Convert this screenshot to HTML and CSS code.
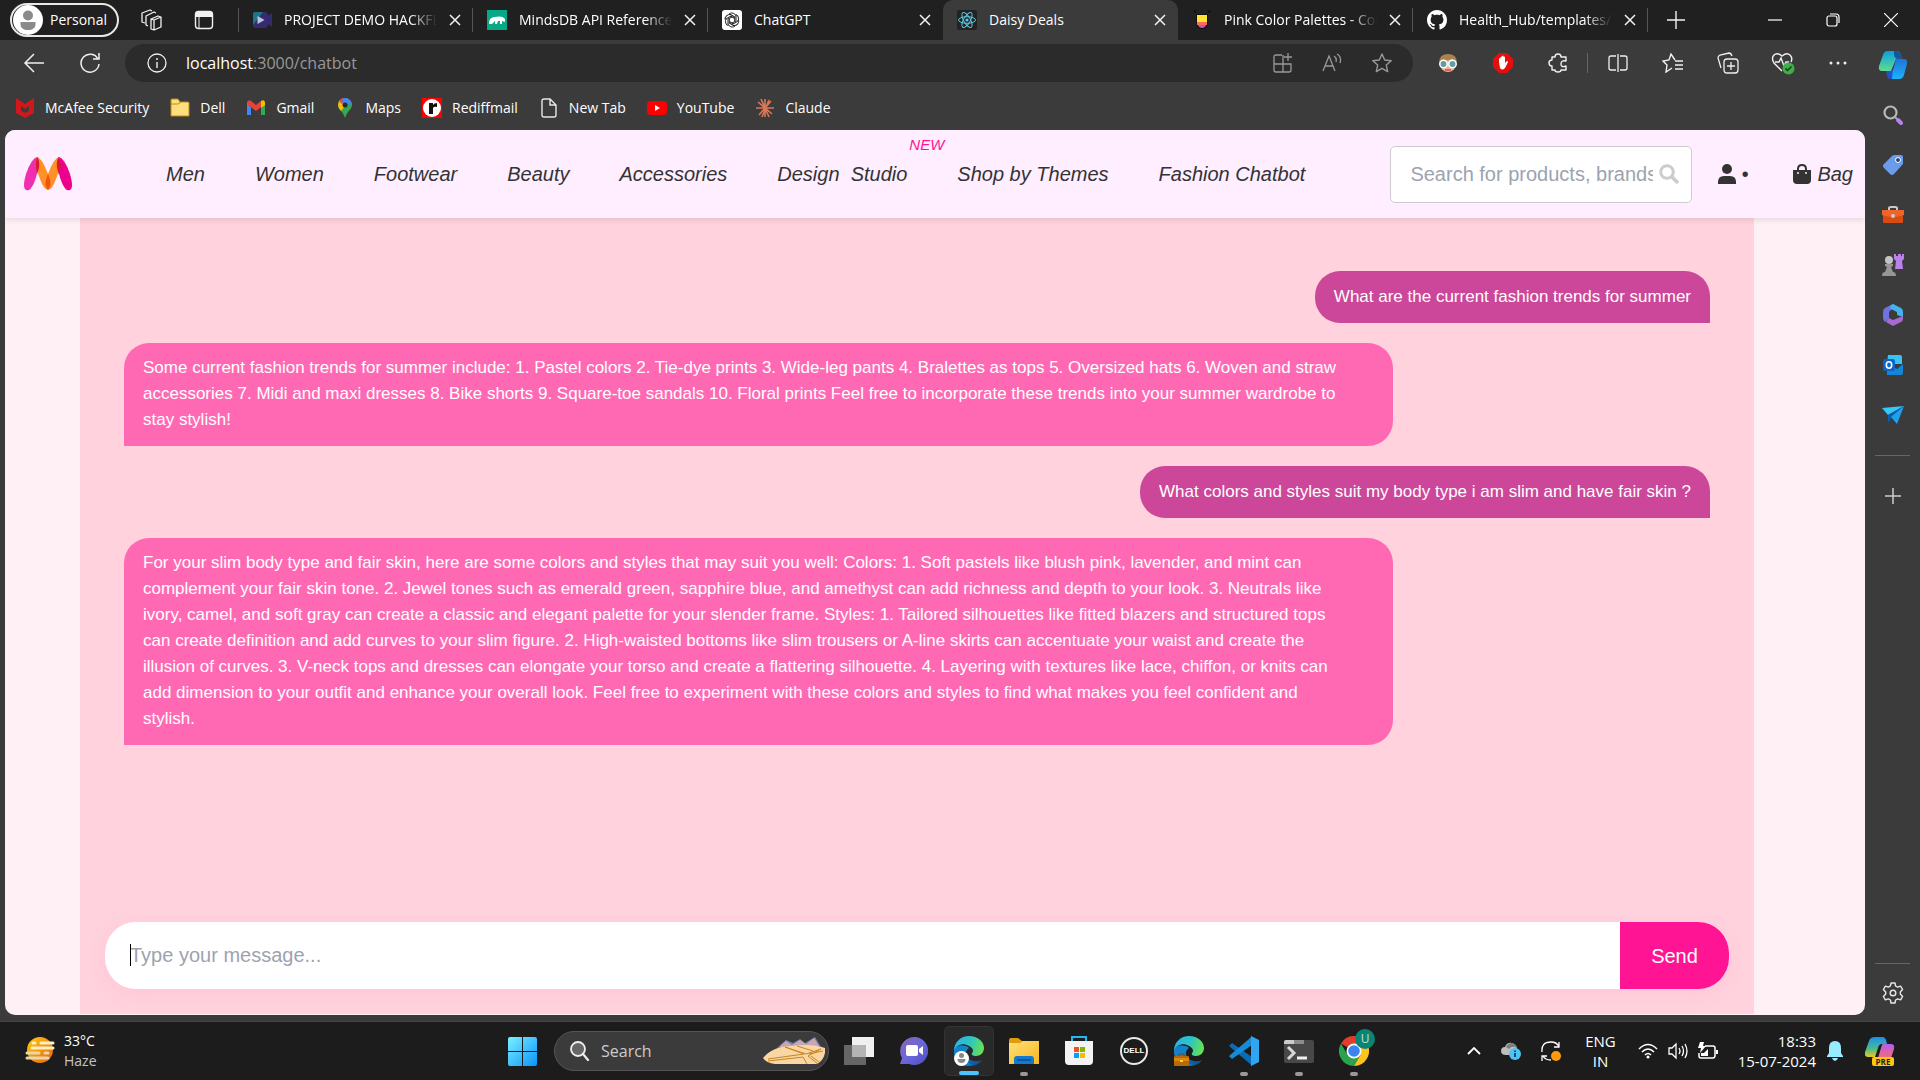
FILE: index.html
```html
<!DOCTYPE html>
<html lang="en">
<head>
    <meta charset="UTF-8">
    <meta name="viewport" content="width=device-width, initial-scale=1.0">
    <title>Daisy Deals</title>
    <link rel="stylesheet" href="styles.css">
</head>
<body>
    <!-- Shared gradients and symbols -->
    <svg class="defs" width="0" height="0" aria-hidden="true">
        <defs>
            <linearGradient id="edgeBlue" x1="0" y1="0" x2="1" y2="1"><stop offset="0" stop-color="#1b9de2"/><stop offset="1" stop-color="#0a4a94"/></linearGradient>
            <linearGradient id="edgeGreen" x1="0" y1="0.4" x2="1" y2="0.6"><stop offset="0" stop-color="#2fb1e8"/><stop offset="0.5" stop-color="#2cc5c3"/><stop offset="1" stop-color="#6be34c"/></linearGradient>
            <linearGradient id="winBlue" x1="0" y1="0" x2="1" y2="1"><stop offset="0" stop-color="#7bf0ff"/><stop offset="1" stop-color="#0a93fb"/></linearGradient>
            <linearGradient id="folderYellow" x1="0" y1="0" x2="1" y2="1"><stop offset="0" stop-color="#ffe07a"/><stop offset="1" stop-color="#f8b71c"/></linearGradient>
            <linearGradient id="copGreen" x1="0" y1="0" x2="0" y2="1"><stop offset="0" stop-color="#0c9fe0"/><stop offset="1" stop-color="#5fdc8e"/></linearGradient>
            <linearGradient id="copBlue" x1="0" y1="0" x2="0" y2="1"><stop offset="0" stop-color="#2471d8"/><stop offset="1" stop-color="#19b4fa"/></linearGradient>
            <linearGradient id="preLeft" x1="0" y1="0" x2="0" y2="1"><stop offset="0" stop-color="#1a8ff0"/><stop offset="0.6" stop-color="#4cbb8a"/><stop offset="1" stop-color="#f0c81e"/></linearGradient>
            <linearGradient id="preRight" x1="0" y1="0" x2="0" y2="1"><stop offset="0" stop-color="#b35cf0"/><stop offset="1" stop-color="#fa6a70"/></linearGradient>
            <linearGradient id="hazeSun" x1="0" y1="0" x2="1" y2="1"><stop offset="0" stop-color="#ffcd11"/><stop offset="1" stop-color="#e75f10"/></linearGradient>
            <linearGradient id="meetPurple" x1="0" y1="0" x2="1" y2="1"><stop offset="0" stop-color="#8a63b8"/><stop offset="0.5" stop-color="#6b68d8"/><stop offset="1" stop-color="#4d4cc4"/></linearGradient>
        </defs>
        <symbol id="edge" viewBox="0 0 30 30">
            <path d="M0 15c0 8 7 15 15 15 6 0 10-2 13-6-5 3-16 1-16-7 0-2 1-4 3-5-5-4-13-3-15 3z" fill="url(#edgeBlue)"/>
            <path d="M0 15c2-6 8-6 12-4-4 6-1 15 6 18-9 3-18-4-18-14z" fill="#1481cf"/>
            <path d="M0 15C0 6 7 0 15 0c9 0 15 6 15 12 0 5-4 8-8 8-3 0-5-1-4-3 2-2 1-5-3-7C9 6 2 9 0 15z" fill="url(#edgeGreen)"/>
        </symbol>
        <symbol id="x" viewBox="0 0 12 12"><path d="M1 1l10 10M11 1L1 11" stroke="#f2f2f2" stroke-width="1.5" fill="none"/></symbol>
        <symbol id="star" viewBox="0 0 22 22"><path d="M11 2l2.7 6 6.5.7-4.9 4.4 1.4 6.5L11 16.300l-5.700 3.300 1.400-6.500L1.800 8.700l6.500-.7z" fill="none" stroke="currentColor" stroke-width="1.4" stroke-linejoin="round"/></symbol>
    </svg>

    <!-- Tab strip -->
    <header class="tab-strip">
        <button class="profile">
            <svg viewBox="0 0 30 30" width="30" height="30"><circle cx="15" cy="15" r="15" fill="#fff"/><circle cx="15" cy="10.500" r="5" fill="#8a8a8a"/><path d="M7.500 17h15v2c0 4-3 6-7.500 6s-7.500-2-7.500-6z" fill="#8a8a8a"/></svg>
            Personal
        </button>
        <button class="strip-icon" aria-label="Workspaces">
            <svg viewBox="0 0 22 22" width="22" height="22" fill="none" stroke="#f2f2f2" stroke-width="1.300" stroke-linejoin="round"><path d="M11 10l7-3 3 1v10l-7 3-3-1zM11 10l3 1v10M14 11l7-3"/><path d="M8 17l-2-1V7l8-4 2 1M5 14l-3-1V4l8-3 2 1"/></svg>
        </button>
        <button class="strip-icon" aria-label="Tab actions">
            <svg viewBox="0 0 20 20" width="20" height="20"><rect x="1.500" y="1.500" width="17" height="17" rx="3" fill="none" stroke="#f2f2f2" stroke-width="1.400"/><path d="M1.500 7V4q0-3 3-3h11q3 0 3 3v3z" fill="#f2f2f2"/><path d="M5 7v11" stroke="#f2f2f2"/></svg>
        </button>
        <nav class="tabs">
            <div class="tab">
                <svg class="favicon" viewBox="0 0 20 20"><path d="M1 4q0-2 2-2h10q3 0 3 3v1l4-3v14l-4-3q0 4-3 4H3q-2 0-2-3z" fill="#362b72"/><path d="M1 4q0-2 2-2h8L1 15z" fill="#1e7586"/><path d="M5.500 6v8l7-4z" fill="#b9c7d8"/></svg>
                <span class="tab-title fade">PROJECT DEMO HACKFEST</span>
                <button class="tab-close" aria-label="Close tab"><svg><use href="#x"/></svg></button>
            </div>
            <div class="tab">
                <svg class="favicon" viewBox="0 0 20 20"><path d="M0 0h20v20H0z" fill="#06a885"/><path d="M2 14c0-5 2-7 6-7 3-1 8-1 10 2v3l-3-1v3h-2v-3h-2l-1 3H8v-3l-3 3z" fill="#fff"/></svg>
                <span class="tab-title fade">MindsDB API Reference - Docs</span>
                <button class="tab-close" aria-label="Close tab"><svg><use href="#x"/></svg></button>
            </div>
            <div class="tab no-line">
                <svg class="favicon" viewBox="0 0 20 20"><rect width="20" height="20" rx="3" fill="#fff"/><g fill="none" stroke="#222"><path id="petal" d="M7 4c2-2 6-1 7 2v5l-4 2"/><use href="#petal" transform="rotate(60 10 10)"/><use href="#petal" transform="rotate(120 10 10)"/><use href="#petal" transform="rotate(180 10 10)"/><use href="#petal" transform="rotate(240 10 10)"/><use href="#petal" transform="rotate(300 10 10)"/></g></svg>
                <span class="tab-title">ChatGPT</span>
                <button class="tab-close" aria-label="Close tab"><svg><use href="#x"/></svg></button>
            </div>
            <div class="tab active no-line">
                <svg class="favicon" viewBox="0 0 20 20"><rect width="20" height="20" rx="2" fill="#222"/><g fill="none" stroke="#5cc8e4"><ellipse cx="10" cy="10" rx="8.500" ry="3.300"/><ellipse cx="10" cy="10" rx="8.500" ry="3.300" transform="rotate(60 10 10)"/><ellipse cx="10" cy="10" rx="8.500" ry="3.300" transform="rotate(120 10 10)"/></g><circle cx="10" cy="10" r="1.600" fill="#5cc8e4"/></svg>
                <span class="tab-title">Daisy Deals</span>
                <button class="tab-close" aria-label="Close tab"><svg><use href="#x"/></svg></button>
            </div>
            <div class="tab">
                <svg class="favicon" viewBox="0 0 20 20"><path d="M4 4h12v8q0 7-6 7t-6-7z" fill="#111"/><path d="M5 5h10v7H5z" fill="#ffe32e"/><path d="M5 12h10v3H5z" fill="#ff6c5f"/><path d="M6 15h8q-1 3-4 3t-4-3z" fill="#c05bb5"/><circle cx="3" cy="1.500" r="1.500" fill="#111"/><circle cx="17" cy="1.500" r="1.500" fill="#111"/></svg>
                <span class="tab-title fade">Pink Color Palettes - Color Hunt</span>
                <button class="tab-close" aria-label="Close tab"><svg><use href="#x"/></svg></button>
            </div>
            <div class="tab">
                <svg class="favicon" viewBox="0 0 16 16"><path fill="#fff" d="M8 0C3.580 0 0 3.580 0 8c0 3.540 2.290 6.530 5.470 7.590.4.070.55-.17.55-.38 0-.19-.01-.82-.01-1.490-2.010.37-2.530-.49-2.690-.94-.09-.23-.48-.94-.82-1.130-.28-.15-.68-.52-.01-.53.63-.01 1.080.58 1.230.82.72 1.210 1.870.87 2.330.66.070-.52.28-.87.510-1.070-1.780-.2-3.640-.89-3.640-3.950 0-.87.31-1.590.82-2.150-.08-.2-.36-1.020.08-2.120 0 0 .67-.21 2.200.82.64-.18 1.320-.27 2-.27s1.360.09 2 .27c1.530-1.040 2.200-.82 2.200-.82.44 1.100.16 1.920.08 2.120.51.56.82 1.270.82 2.150 0 3.070-1.870 3.750-3.650 3.950.29.25.54.73.54 1.480 0 1.070-.01 1.930-.01 2.200 0 .21.15.46.55.38A8.010 8.010 0 0 0 16 8c0-4.420-3.580-8-8-8z"/></svg>
                <span class="tab-title fade">Health_Hub/templates/index</span>
                <button class="tab-close" aria-label="Close tab"><svg><use href="#x"/></svg></button>
            </div>
            <button class="new-tab" aria-label="New tab"><svg viewBox="0 0 18 18" width="18" height="18"><path d="M9 0v18M0 9h18" stroke="#f2f2f2" stroke-width="1.400"/></svg></button>
        </nav>
        <div class="window-buttons">
            <button aria-label="Minimize"><svg viewBox="0 0 14 14" width="14" height="14"><path d="M0 7h14" stroke="#fff" stroke-width="1.200"/></svg></button>
            <button aria-label="Restore"><svg viewBox="0 0 14 14" width="14" height="14" fill="none" stroke="#fff" stroke-width="1.200"><rect x="1" y="3" width="10" height="10" rx="2"/><path d="M4 1h6q3 0 3 3v6"/></svg></button>
            <button aria-label="Close"><svg viewBox="0 0 14 14" width="14" height="14"><path d="M0 0l14 14M14 0L0 14" stroke="#fff" stroke-width="1.200"/></svg></button>
        </div>
    </header>

    <div class="browser">
        <div class="browser-left">
            <!-- Address bar -->
            <div class="toolbar">
                <button class="tool" aria-label="Back"><svg viewBox="0 0 22 22" width="22" height="22"><path d="M21 11H2m9-9l-9 9 9 9" fill="none" stroke="#f0f0f0" stroke-width="1.500"/></svg></button>
                <button class="tool" aria-label="Refresh"><svg viewBox="0 0 22 22" width="22" height="22"><path d="M19 7a9 9 0 1 0 1 5M20 1v6h-6" fill="none" stroke="#f0f0f0" stroke-width="1.500"/></svg></button>
                <div class="address">
                    <svg viewBox="0 0 20 20" width="20" height="20"><circle cx="10" cy="10" r="9" fill="none" stroke="#f0f0f0" stroke-width="1.300"/><path d="M10 9v6M10 5v2" stroke="#f0f0f0" stroke-width="1.400"/></svg>
                    <span class="url"><b>localhost</b>:3000/chatbot</span>
                    <button aria-label="Apps"><svg viewBox="0 0 20 20" width="20" height="20" fill="none" stroke="#999" stroke-width="1.300"><path d="M9 2H3q-2 0-2 2v13q0 2 2 2h13q2 0 2-2v-6H1M10 2v17M15 0v8M11 4h8"/></svg></button>
                    <button aria-label="Read aloud"><svg viewBox="0 0 20 20" width="20" height="20" fill="none" stroke="#999" stroke-width="1.300"><path d="M1 18L7 3l6 15M3 13h8M12 3q3 2 2 6M15 1q5 3 3 9"/></svg></button>
                    <button aria-label="Favourite" class="muted"><svg width="22" height="22"><use href="#star"/></svg></button>
                </div>
                <div class="extensions">
                    <button aria-label="Grandma"><svg viewBox="0 0 20 20" width="20" height="20"><circle cx="10" cy="11" r="8" fill="#edb290"/><path d="M1 10Q1 1 10 1t9 9l-5-4q-6 3-9 1z" fill="#a88350"/><circle cx="5.500" cy="11" r="3.700" fill="#5f9ba8" stroke="#fff" stroke-width="1.500"/><circle cx="14.500" cy="11" r="3.700" fill="#5f9ba8" stroke="#fff" stroke-width="1.500"/><path d="M7 17h6" stroke="#c5534c" stroke-width="1.500"/></svg></button>
                    <button aria-label="Ad blocker"><svg viewBox="0 0 20 20" width="20" height="20"><path d="M6 0h8l6 6v8l-6 6H6l-6-6V6z" fill="#e60d0d"/><path d="M6 9V5.500q1-1 1.500 0V4q1-1 1.500 0V3q1-1 1.500 0v1q1-1 1.500 0v6l2-2q1 0 1 1l-3 6q-3 3-5 0z" fill="#fff"/></svg></button>
                    <button aria-label="Extensions"><svg viewBox="0 0 20 20" width="20" height="20"><path d="M4 4h3q0-3 3-3t3 3h5v4q-5-1-5 3t5 2v4h-5q0 2-3 2t-3-2H4v-4q-3 0-3-3t3-3z" fill="none" stroke="#f0f0f0" stroke-width="1.400" stroke-linejoin="round"/></svg></button>
                    <span class="divider"></span>
                    <button aria-label="Split screen"><svg viewBox="0 0 20 20" width="20" height="20" fill="none" stroke="#f0f0f0" stroke-width="1.300"><path d="M8 3H3Q1 3 1 5v10q0 2 2 2h5M12 3h5q2 0 2 2v10q0 2-2 2h-5M10 1v18"/></svg></button>
                    <button aria-label="Favourites"><svg viewBox="0 0 22 20" width="22" height="20" fill="none" stroke="#f0f0f0" stroke-width="1.400"><path d="M13 7L9 1 7 7 1 8l4 4-1 7 6-4M13 8h8M13 12h8M13 16h8"/></svg></button>
                    <button aria-label="Collections"><svg viewBox="0 0 22 22" width="22" height="22" fill="none" stroke="#f0f0f0" stroke-width="1.300"><rect x="7" y="7" width="14" height="14" rx="3"/><path d="M14 10v8M10 14h8M4 16L1 6q0-2 2-3l9-2q2 0 3 3"/></svg></button>
                    <button aria-label="Browser essentials"><svg viewBox="0 0 24 24" width="24" height="24"><path d="M11 20L3 12Q0 7 3 4t8 1q5-4 8-1t1 7M4 11h4l2-4 3 8 2-4h3" fill="none" stroke="#f0f0f0" stroke-width="1.400"/><circle cx="17.500" cy="17.500" r="6" fill="#3fae49"/><path d="M14.500 17.500l2 2 4-4" fill="none" stroke="#103d16" stroke-width="1.500"/></svg></button>
                    <button aria-label="Settings and more"><svg viewBox="0 0 20 20" width="20" height="20" fill="#f0f0f0"><circle cx="3" cy="10" r="1.500"/><circle cx="10" cy="10" r="1.500"/><circle cx="17" cy="10" r="1.500"/></svg></button>
                </div>
            </div>

            <!-- Bookmarks -->
            <nav class="bookmarks">
                <a href="#"><svg viewBox="0 0 20 20"><path d="M1 0l9 6 9-6v15l-9 5-9-5zM6 8v5l4 2 4-2V8l-4 3z" fill="#d0181c" fill-rule="evenodd"/></svg>McAfee Security</a>
                <a href="#"><svg viewBox="0 0 20 20"><path d="M1 2q0-1 1-1h6l2 3h8q1 0 1 1v13H1z" fill="#ffde7d" stroke="#c08a10"/><path d="M1 6h7l3-2" fill="none" stroke="#c08a10"/></svg>Dell</a>
                <a href="#"><svg viewBox="0 0 20 20"><path d="M1 5v12h4V9z" fill="#4285f4"/><path d="M19 5v12h-4V9z" fill="#34a853"/><path d="M1 4q2-3 4-1l5 4 5-4v6l-5 4-9-7z" fill="#ea4335"/><path d="M15 3q3-2 4 1v3l-4 3z" fill="#fbbc04"/></svg>Gmail</a>
                <a href="#"><svg viewBox="0 0 20 20"><path d="M3 7a7 7 0 0 1 14 0q0 3-4 7-2 3-3 6-1-3-3-6-4-4-4-7z" fill="#34a853"/><path d="M3 7q0 3 3 6l8-10Q8-2 4 3z" fill="#fbbc04"/><path d="M4 3l3 3 6-5Q8-2 4 3z" fill="#ea4335"/><path d="M8 0q7-1 9 6l-7 1-3-3z" fill="#4285f4"/><circle cx="10" cy="7" r="2.500" fill="#2b2b2b"/></svg>Maps</a>
                <a href="#"><svg viewBox="0 0 20 20"><path d="M0 0h20v20H0z" fill="#f00"/><circle cx="10" cy="10" r="9" fill="#fff"/><path d="M7 5h4v2q1-2 4-2v4q-3-1-4 1v6H7z" fill="#111"/></svg>Rediffmail</a>
                <a href="#"><svg viewBox="0 0 20 20"><path d="M3 3q0-2 2-2h6l6 6v10q0 2-2 2H5q-2 0-2-2zM11 1v6h6" fill="none" stroke="#e8e8e8" stroke-width="1.400"/></svg>New Tab</a>
                <a href="#"><svg viewBox="0 0 20 20"><rect y="3" width="20" height="14" rx="4" fill="#f00"/><path d="M8 7v6l5-3z" fill="#fff"/></svg>YouTube</a>
                <a href="#"><svg viewBox="0 0 20 20"><path d="M10 1v18M1 10h18M3 4l14 12M16 3L4 17M6 1l8 18M14 2L7 19" stroke="#d97757" stroke-width="1.600"/></svg>Claude</a>
            </nav>

            <!-- The shop page -->
            <div class="page">
                <header class="navbar">
                    <a class="logo" href="#" aria-label="Daisy Deals">
                        <svg viewBox="0 0 48 34" width="48" height="34">
                            <path d="M13 0Q7 2 2 17-2 31 2 33q4 2 8-7Q16 11 14 0z" fill="#f02eb0"/>
                            <path d="M35 0q6 2 11 17 4 14 0 16-4 2-8-7Q32 11 34 0z" fill="#ed008c"/>
                            <path d="M13 0q5 1 11 17Q30 1 35 0q3 8-3 22-4 11-8 11t-8-11Q11 9 13 0z" fill="#ff9128"/>
                            <path d="M13 0q3 3 2 11l-2 6q-2-10 0-17z" fill="#d81b2a"/>
                            <path d="M35 0q-3 3-2 11l2 7q3-10 0-18z" fill="#d81b2a"/>
                            <path d="M24 17q5 11 0 16-5-5 0-16z" fill="#f4530f"/>
                        </svg>
                    </a>
                    <nav class="nav-links">
                        <a href="#">Men</a>
                        <a href="#">Women</a>
                        <a href="#">Footwear</a>
                        <a href="#">Beauty</a>
                        <a href="#">Accessories</a>
                        <a href="#" class="studio">Design&nbsp; Studio<sup>NEW</sup></a>
                        <a href="#">Shop by Themes</a>
                        <a href="#">Fashion Chatbot</a>
                    </nav>
                    <div class="search-box">
                        <input type="text" aria-label="Search" placeholder="Search for products, brands and more">
                        <svg viewBox="0 0 20 20" width="20" height="20"><circle cx="8" cy="8" r="6.300" fill="none" stroke="#ccc" stroke-width="3"/><path d="M13 13l6 6" stroke="#ccc" stroke-width="3.500"/></svg>
                    </div>
                    <a class="user" href="#" aria-label="Profile">
                        <svg viewBox="0 0 18 20" width="18" height="20" fill="#333"><circle cx="9" cy="5" r="5"/><path d="M0 20v-2q0-6 6-6h6q6 0 6 6v2z"/></svg>
                        <span>•</span>
                    </a>
                    <a class="bag" href="#">
                        <svg viewBox="0 0 18 20" width="18" height="20"><path d="M0 6h18v10q0 4-4 4H4q-4 0-4-4z" fill="#333"/><path d="M5 9V5q0-4 4-4t4 4v4" fill="none" stroke="#333" stroke-width="2"/><circle cx="5" cy="9" r="1" fill="#fef"/><circle cx="13" cy="9" r="1" fill="#fef"/></svg>
                        Bag
                    </a>
                </header>

                <main class="chat">
                    <div class="messages">
                        <div class="message user-message">What are the current fashion trends for summer</div>
                        <div class="message bot-message">Some current fashion trends for summer include: 1. Pastel colors 2. Tie-dye prints 3. Wide-leg pants 4. Bralettes as tops 5. Oversized hats 6. Woven and straw accessories 7. Midi and maxi dresses 8. Bike shorts 9. Square-toe sandals 10. Floral prints Feel free to incorporate these trends into your summer wardrobe to stay stylish!</div>
                        <div class="message user-message">What colors and styles suit my body type i am slim and have fair skin ?</div>
                        <div class="message bot-message">For your slim body type and fair skin, here are some colors and styles that may suit you well: Colors: 1. Soft pastels like blush pink, lavender, and mint can complement your fair skin tone. 2. Jewel tones such as emerald green, sapphire blue, and amethyst can add richness and depth to your look. 3. Neutrals like ivory, camel, and soft gray can create a classic and elegant palette for your slender frame. Styles: 1. Tailored silhouettes like fitted blazers and structured tops can create definition and add curves to your slim figure. 2. High-waisted bottoms like slim trousers or A-line skirts can accentuate your waist and create the illusion of curves. 3. V-neck tops and dresses can elongate your torso and create a flattering silhouette. 4. Layering with textures like lace, chiffon, or knits can add dimension to your outfit and enhance your overall look. Feel free to experiment with these colors and styles to find what makes you feel confident and stylish.</div>
                    </div>
                    <form class="message-form">
                        <input type="text" aria-label="Message" placeholder="Type your message...">
                        <button type="button">Send</button>
                    </form>
                </main>
            </div>
        </div>

        <!-- Edge sidebar -->
        <aside class="sidebar">
            <button aria-label="Copilot"><svg viewBox="0 0 30 30" width="30" height="30"><path d="M10 1h9q3 0 4 5l1 3h-6l-5 12H4q-4 0-3-5L5 5q1-4 5-4z" fill="url(#copGreen)"/><path d="M16 1h3q3 0 4 5l1 3h-4q-3 0-4-4z" fill="#14559e"/><path d="M20 9h6q4 0 3 5l-3 11q-1 4-5 4h-8q-4 0-4-7h3q3 0 4-5l1-4q1-4 2-4z" fill="url(#copBlue)"/><path d="M8 21h4q3 0 3-3l-1 11h-2q-3-1-4-8z" fill="#2450d0"/></svg></button>
            <button aria-label="Search"><svg viewBox="0 0 20 20" width="20" height="20"><circle cx="7.500" cy="7.500" r="6" fill="none" stroke="#b9b9b9" stroke-width="2.200"/><path d="M12 12l2 2" stroke="#aaa" stroke-width="2"/><path d="M15 15l3 3" stroke="#b684e8" stroke-width="4" stroke-linecap="round"/></svg></button>
            <button aria-label="Shopping"><svg viewBox="0 0 20 20" width="20" height="20"><path d="M0 10L9 1q1-1 3-1h6q2 0 2 2v7l-9 10q-2 2-4 0l-6-6q-2-2-1-3z" fill="#6b9beb"/><circle cx="15" cy="5" r="2.500" fill="#25477a" stroke="#fff"/></svg></button>
            <button aria-label="Tools"><svg viewBox="0 0 22 20" width="22" height="20"><path d="M7 6V3q0-1 2-1h4q2 0 2 1v3" fill="none" stroke="#c9c9c9" stroke-width="2"/><path d="M1 9h20v8q0 1-1 1H2q-1 0-1-1z" fill="#d94c11"/><path d="M0 5h22v5q-11 4-22 0z" fill="#ee642b"/><circle cx="11" cy="11" r="2" fill="#ccc"/></svg></button>
            <button aria-label="Games"><svg viewBox="0 0 22 22" width="22" height="22"><path d="M12 0h2v2h2V0h3v2h1V0h2v5l-2 2 1 8h-8l1-8-2-2z" fill="#bb80ea"/><circle cx="7" cy="6" r="4" fill="#c4c4c4"/><path d="M3 10h8v2l-2 1 2 5q3 0 3 4H0q0-4 3-4l2-5-2-1z" fill="#969696"/></svg></button>
            <button aria-label="Microsoft 365"><svg viewBox="0 0 20 22" width="20" height="22"><path d="M10 0L2 4Q0 5 0 8v6q0 2 2 4l4-3V9q0-2 2-3l5-4z" fill="#6f73e0"/><path d="M10 0l8 4q2 1 2 4v5l-6-2V8L8 5l-1-3z" fill="#42b3ee"/><path d="M20 12v3q0 2-2 3l-8 4-7-4 3-4 4 2z" fill="#a66ad0"/></svg></button>
            <button aria-label="Outlook"><svg viewBox="0 0 20 20" width="20" height="20"><path d="M5 0h12q2 0 2 2v7H4z" fill="#38c3f4"/><path d="M4 8l10 6 6-5v9q0 2-2 2H4z" fill="#1386d7"/><rect y="4" width="12" height="12" rx="2" fill="#0a66c8"/><ellipse cx="6" cy="10" rx="2.700" ry="3.200" fill="none" stroke="#fff" stroke-width="1.600"/></svg></button>
            <button aria-label="Drop"><svg viewBox="0 0 22 18" width="22" height="18"><path d="M0 2l22-2L6 9z" fill="#35c8fa"/><path d="M22 0L6 9v8l3-5z" fill="#0b5fae"/><path d="M22 0L9 11l6 7z" fill="#1ea1ec"/></svg></button>
            <hr>
            <button aria-label="Customize"><svg viewBox="0 0 16 16" width="16" height="16"><path d="M8 0v16M0 8h16" stroke="#ccc" stroke-width="1.500"/></svg></button>
            <hr class="bottom-line">
            <button aria-label="Settings"><svg viewBox="0 0 22 22" width="22" height="22" fill="none" stroke="#e8e8e8" stroke-width="1.400" stroke-linejoin="round"><path d="M9 1h4l.6 3 2 1.100 3-1 2 3.400L18.300 10v2l2.300 2.500-2 3.400-3-1-2 1.100-.6 3H9l-.6-3-2-1.100-3 1-2-3.400L3.700 12v-2L1.400 7.500l2-3.400 3 1 2-1.100z"/><circle cx="11" cy="11" r="2.800"/></svg></button>
        </aside>
    </div>

    <!-- Windows taskbar -->
    <footer class="taskbar">
        <div class="weather">
            <svg viewBox="0 0 30 30" width="30" height="30"><circle cx="15" cy="14" r="13" fill="url(#hazeSun)"/><g stroke-width="3" stroke-linecap="round"><path d="M8 7h2M16 7h12M7 12h21" stroke="#fff0c4"/><path d="M2 17h12M20 17h3M2 22h21" stroke="#ead6a8"/></g></svg>
            <p>33°C<br><span>Haze</span></p>
        </div>
        <div class="apps">
            <button class="app start" aria-label="Start"><svg viewBox="0 0 29 29" width="29" height="29"><path d="M0 2q0-2 2-2h12v14H0zM15 0h12q2 0 2 2v12H15zM0 15h14v14H2q-2 0-2-2zM15 15h14v12q0 2-2 2H15z" fill="url(#winBlue)"/></svg></button>
            <label class="task-search">
                <svg viewBox="0 0 20 20" width="20" height="20"><circle cx="8" cy="8" r="7" fill="#666" stroke="#eee" stroke-width="1.800"/><path d="M13 13l5 6" stroke="#eee" stroke-width="2.200" stroke-linecap="round"/></svg>
                <input type="text" placeholder="Search" aria-label="Search Windows">
                <svg class="hill" viewBox="0 0 62 30" width="62" height="30"><path d="M14 12l9-8 7 3 7-4 5 4 10-6 6 10v8H14z" fill="#7181ae"/><path d="M17 10l6-5 6 4 8-5 6 4 8-6 5 8-38 6z" fill="#c9a7b0"/><path d="M0 22Q10 10 29 10q20-3 33 2v5q-2 9-9 11H12Q3 27 0 22z" fill="#f9d6a3"/><path d="M5 23l36-5-19-7 21 7 15-5-13 7 10 8M5 25l35-4 4 7M34 10l16 5M46 18l14-3M48 20l8 6" fill="none" stroke="#c98422"/></svg>
            </label>
            <button class="app" aria-label="Task view"><svg viewBox="0 0 30 28" width="30" height="28"><path d="M8 0h22v20H8z" fill="#f0f0f0"/><path d="M0 8h22v20H0z" fill="#666"/><path d="M8 8h14v12H8z" fill="#b4b4b4"/></svg></button>
            <button class="app" aria-label="Chat"><svg viewBox="0 0 28 28" width="28" height="28"><path d="M14 0a14 14 0 1 1-5 27H0l2-6A14 14 0 0 1 14 0z" fill="url(#meetPurple)"/><rect x="6" y="8" width="12" height="11" rx="2" fill="#fff"/><path d="M19 12l4-3v9l-4-3z" fill="#fff"/></svg></button>
            <button class="app current" aria-label="Edge"><svg viewBox="0 0 30 30" width="30" height="30"><use href="#edge" width="30" height="30"/><circle cx="7.500" cy="22.500" r="7.500" fill="#fff"/><circle cx="7.500" cy="19.500" r="2.500" fill="#888"/><path d="M3.500 23h8q0 4-4 4t-4-4z" fill="#888"/></svg></button>
            <button class="app open" aria-label="File Explorer"><svg viewBox="0 0 30 28" width="30" height="28"><path d="M0 3q0-2 2-2h7l4 3h11v8H0z" fill="#e09c0c"/><path d="M0 6h11l3-2h16v23H0z" fill="url(#folderYellow)"/><path d="M5 27v-5q0-3 3-3h14q3 0 3 3v5z" fill="#1579d0"/><path d="M8 23h14" stroke="#0b4f98" stroke-width="1.500"/></svg></button>
            <button class="app" aria-label="Store"><svg viewBox="0 0 30 30" width="30" height="30"><path d="M8 6V1h14v5" fill="none" stroke="#28b6ef" stroke-width="2"/><path d="M1 5h28v20q0 4-4 4H5q-4 0-4-4z" fill="#f3f3f3"/><path d="M10 11h5v5h-5z" fill="#f25022"/><path d="M16 11h5v5h-5z" fill="#7fba00"/><path d="M10 17h5v5h-5z" fill="#00a4ef"/><path d="M16 17h5v5h-5z" fill="#ffb900"/></svg></button>
            <button class="app dell" aria-label="Dell"><span>DELL</span></button>
            <button class="app" aria-label="Edge for work"><svg viewBox="0 0 30 30" width="30" height="30"><use href="#edge" width="30" height="30"/><rect y="20" width="15" height="10" rx="1" fill="#b86a08"/><path d="M0 22h15v3H0z" fill="#d88610"/><path d="M5 20v-2h5v2" fill="none" stroke="#7b4a08"/><path d="M6 24h3v2H6z" fill="#ffd23a"/></svg></button>
            <button class="app open" aria-label="VS Code"><svg viewBox="0 0 30 30" width="30" height="30"><path d="M3 7L0 10l20 17 3 3v-9z" fill="#0b6cb5"/><path d="M3 23l-3-3L20 3l3-3v9z" fill="#168bd7"/><path d="M22 0l8 4v22l-8 4z" fill="#30a5f2"/></svg></button>
            <button class="app open" aria-label="Terminal"><svg viewBox="0 0 30 23" width="30" height="23"><rect width="30" height="23" rx="2" fill="#484848"/><path d="M0 4V2q0-2 2-2h8v4z" fill="#ccc"/><path d="M10 0h10v4H10z" fill="#8c8c8c"/><path d="M4 7l6 6-6 6" fill="none" stroke="#d8d8d8" stroke-width="3"/><path d="M13 18h10" stroke="#f0f0f0" stroke-width="3"/></svg></button>
            <button class="app open chrome" aria-label="Chrome"><svg viewBox="0 0 30 30" width="30" height="30"><path d="M15 15L2 7.500A15 15 0 0 1 28 7.500H15z" fill="#e33b2e"/><path d="M15 15l-6.500 3.750L2 7.500A15 15 0 0 0 15 30l6.500-11.250z" fill="#2ba24c"/><path d="M15 7.500h13A15 15 0 0 1 15 30l6.500-11.250z" fill="#fcc31e"/><circle cx="15" cy="15" r="7.500" fill="#fff"/><circle cx="15" cy="15" r="5.800" fill="#3b82f2"/></svg><span class="badge">U</span></button>
        </div>
        <div class="tray">
            <svg viewBox="0 0 14 8" width="14" height="8"><path d="M1 7l6-6 6 6" fill="none" stroke="#fff" stroke-width="1.800"/></svg>
            <svg class="cloud" viewBox="0 0 20 18" width="20" height="18"><path d="M5 13Q0 13 0 9t4-4q2-5 7-4 4 1 5 5v7z" fill="#bdbdbd"/><path d="M5 5q2-4 6-4 4 1 5 5-5-3-8 1z" fill="#7d7d7d"/><circle cx="14" cy="12" r="6" fill="#4cc2f6"/><path d="M14 11v4M14 8.500v1.500" stroke="#123" stroke-width="1.500"/></svg>
            <svg viewBox="0 0 20 20" width="20" height="20"><path d="M1 11Q0 1 10 1q6 0 8 5M18 1v5h-5M1 20v-5h5M2 15q2 4 8 4" fill="none" stroke="#fff" stroke-width="1.300"/><circle cx="15" cy="15" r="5" fill="#ff9a0a"/></svg>
            <p class="lang">ENG<br>IN</p>
            <div class="status">
                <svg viewBox="0 0 20 16" width="20" height="16" fill="none" stroke="#fff" stroke-width="1.600"><path d="M1 6q9-9 18 0M4 9q6-6 12 0M7 12q3-3 6 0"/><circle cx="10" cy="14" r="1.500" fill="#fff" stroke="none"/></svg>
                <svg viewBox="0 0 20 18" width="20" height="18" fill="none" stroke="#fff" stroke-width="1.300"><path d="M1 6h3l4-4v14l-4-4H1zM11 6q2 3 0 6M14 4q3 5 0 10M17 2q4 7 0 14"/></svg>
                <svg viewBox="0 0 20 18" width="20" height="18"><path d="M7 4h8q2 0 2 2v7q0 3-2 3H3q-2 0-2-2v-3" fill="none" stroke="#fff" stroke-width="1.500"/><path d="M18 8h2v4h-2zM3 11h3l4-4v7H3zM2 0h4L5 4h3l-6 7 1-5H0z" fill="#fff"/></svg>
            </div>
            <p class="clock">18:33<br>15-07-2024</p>
            <svg viewBox="0 0 16 20" width="16" height="20"><path d="M0 15l2-3V7q0-7 6-7t6 7v5l2 3v1H0zM5 17h6q-1 3-3 3t-3-3z" fill="#99ebff"/></svg>
            <span class="preview">
                <svg viewBox="0 0 30 28" width="30" height="28"><path d="M10 0h8q2 0 3 3l1 4h-5q-3 0-4 4l-3 9H3q-4 0-3-5L4 4q1-4 6-4z" fill="url(#preLeft)"/><path d="M18 7h8q4 0 3 5l-3 9H13l3-10q1-4 2-4z" fill="url(#preRight)"/></svg>
                <b>PRE</b>
            </span>
        </div>
    </footer>
</body>
</html>
```

FILE: styles.css
```css
:root {
    --chrome: #3b3b3b;
    --chrome-dark: #202020;
    --address: #2b2b2b;
    --page: #fff0f5;
    --navbar: #feeeff;
    --panel: #ffd2de;
    --user: #cc4799;
    --bot: #ff69b4;
    --accent: #ff1493;
    --dark: #333;
}

* {
    margin: 0;
    padding: 0;
    box-sizing: border-box;
}

body {
    height: 100vh;
    display: flex;
    flex-direction: column;
    overflow: hidden;
    background-color: var(--chrome);
    color: #fff;
    font: 14px/20px 'Open Sans', 'Noto Sans', sans-serif;
}

button {
    border: none;
    background: none;
    color: inherit;
    font: inherit;
    cursor: pointer;
}

a {
    color: inherit;
    text-decoration: none;
}

svg {
    display: block;
    flex-shrink: 0;
}

.defs {
    position: absolute;
}

/* Tab strip */
.tab-strip {
    display: flex;
    align-items: center;
    height: 40px;
    flex-shrink: 0;
    background-color: var(--chrome-dark);
}

.profile {
    display: flex;
    align-items: center;
    gap: 7px;
    width: 109px;
    height: 34px;
    margin: 0 11px 0 10px;
    padding-left: 1px;
    border: 2px solid #e8e8e8;
    border-radius: 17px;
}

.strip-icon {
    display: flex;
    justify-content: center;
    width: 42px;
    margin-right: 11px;
}

.tabs {
    display: flex;
    align-items: center;
    flex: 1;
    min-width: 0;
    height: 40px;
    margin-left: 2px;
}

.tab {
    display: flex;
    align-items: center;
    flex: 0 1 235px;
    min-width: 0;
    height: 40px;
    padding: 0 12px 0 14px;
    position: relative;
}

.tab::after,
.tab:first-child::before {
    content: '';
    position: absolute;
    right: 0;
    width: 1px;
    height: 24px;
    background-color: #555;
}

.tab:first-child::before {
    left: 0;
}

.tab.no-line::after {
    display: none;
}

.tab.active {
    background-color: var(--chrome);
    border-radius: 10px 10px 0 0;
}

.favicon {
    width: 20px;
    height: 20px;
    margin-right: 12px;
}

.tab-title {
    flex: 1;
    overflow: hidden;
    white-space: nowrap;
}

.tab-title.fade {
    -webkit-mask-image: linear-gradient(to right, #000 82%, transparent);
    mask-image: linear-gradient(to right, #000 82%, transparent);
}

.tab-close {
    margin-left: 12px;
}

.tab-close svg {
    width: 12px;
    height: 12px;
}

.new-tab {
    margin-left: 19px;
}

.window-buttons {
    display: flex;
}

.window-buttons button {
    display: flex;
    justify-content: center;
    width: 58px;
}

/* Browser frame */
.browser {
    display: flex;
    flex: 1;
    min-height: 0;
}

.browser-left {
    display: flex;
    flex-direction: column;
    flex: 1;
    min-width: 0;
}

.toolbar {
    display: flex;
    align-items: center;
    height: 46px;
    flex-shrink: 0;
}

.tool {
    display: flex;
    justify-content: center;
    width: 56px;
}

.tool:first-child {
    margin-left: 6px;
}

.address {
    display: flex;
    align-items: center;
    flex: 1;
    gap: 29px;
    height: 38px;
    margin-left: 7px;
    padding: 0 20px 0 22px;
    border-radius: 19px;
    background-color: var(--address);
}

.url {
    flex: 1;
    margin-left: -10px;
    color: #999;
    font-size: 16px;
}

.url b {
    color: #fff;
    font-weight: 400;
}

.muted {
    color: #999;
}

.extensions {
    display: flex;
    align-items: center;
    margin-left: 7px;
}

.extensions button {
    display: flex;
    justify-content: center;
    width: 55px;
}

.divider {
    width: 1px;
    height: 20px;
    margin: 0 2px;
    background-color: #666;
}

.bookmarks {
    display: flex;
    align-items: center;
    gap: 21px;
    height: 44px;
    flex-shrink: 0;
    padding-left: 15px;
}

.bookmarks a {
    display: flex;
    align-items: center;
    gap: 10px;
}

.bookmarks svg {
    width: 20px;
    height: 20px;
}

/* Sidebar */
.sidebar {
    display: flex;
    flex-direction: column;
    align-items: center;
    width: 55px;
    padding-bottom: 3px;
}

.sidebar button {
    display: flex;
    align-items: center;
    justify-content: center;
    width: 100%;
    height: 50px;
}

.sidebar hr {
    width: 35px;
    margin: 15px 0;
    border: none;
    border-top: 1px solid #666;
}

.sidebar .bottom-line {
    margin: auto 0 4px;
}

/* Shop page */
.page {
    display: flex;
    flex-direction: column;
    flex: 1;
    min-height: 0;
    margin: 0 0 6px 5px;
    border-radius: 10px;
    overflow: hidden;
    background-color: var(--page);
    color: var(--dark);
    font: 20px/30px Arial, 'Liberation Sans', sans-serif;
}

.navbar {
    display: flex;
    align-items: center;
    height: 88px;
    flex-shrink: 0;
    padding: 0 12px 0 19px;
    background-color: var(--navbar);
    box-shadow: 0 2px 6px rgba(0, 0, 0, 0.1);
    font-style: italic;
    position: relative;
}

.nav-links {
    display: flex;
    gap: 50px;
    margin-left: 94px;
    white-space: nowrap;
}

.studio {
    position: relative;
}

.studio sup {
    position: absolute;
    left: 100%;
    bottom: 100%;
    margin: 0 0 6px 2px;
    color: var(--accent);
    font-size: 15px;
    line-height: 16px;
}

.search-box {
    display: flex;
    align-items: center;
    width: 302px;
    height: 57px;
    margin-left: auto;
    padding: 0 12px 0 19px;
    gap: 6px;
    border: 1px solid #ccc;
    border-radius: 5px;
    background-color: #fff;
}

.search-box input {
    flex: 1;
    min-width: 0;
    padding: 0;
    border: none;
    outline: none;
    font: 20px Arial, 'Liberation Sans', sans-serif;
}

input::placeholder {
    color: #9ca3af;
    opacity: 1;
}

.user {
    display: flex;
    align-items: center;
    gap: 5px;
    margin: 0 45px 0 26px;
}

.bag {
    display: flex;
    align-items: center;
    gap: 6px;
}

.chat {
    display: flex;
    flex-direction: column;
    flex: 1;
    min-height: 0;
    margin: 0 111px 1px 75px;
    padding: 25px;
    background-color: var(--panel);
}

.messages {
    display: flex;
    flex-direction: column;
    flex: 1;
    gap: 20px;
    min-height: 0;
    padding: 28px 19px 0;
}

.message {
    max-width: 80%;
    padding: 13px 19px;
    border-radius: 25px;
    color: #fff;
    font-size: 17px;
    line-height: 26px;
}

.user-message {
    align-self: flex-end;
    border-bottom-right-radius: 0;
    background-color: var(--user);
}

.bot-message {
    align-self: flex-start;
    padding: 12px 50px 13px 19px;
    border-bottom-left-radius: 0;
    background-color: var(--bot);
}

.message-form {
    display: flex;
    height: 67px;
    flex-shrink: 0;
    border-radius: 31px;
    overflow: hidden;
    background-color: #fff;
    box-shadow: 0 5px 19px rgba(255, 105, 140, 0.1);
    position: relative;
}

/* text cursor */
.message-form::before {
    content: '';
    position: absolute;
    left: 25px;
    top: 22px;
    width: 1px;
    height: 22px;
    background-color: #000;
}

.message-form input {
    flex: 1;
    padding: 0 25px;
    border: none;
    outline: none;
    background: none;
    font: 20px Arial, 'Liberation Sans', sans-serif;
}

.message-form button {
    width: 109px;
    background-color: var(--accent);
    color: #fff;
}

/* Taskbar */
.taskbar {
    display: grid;
    grid-template-columns: 1fr auto 1fr;
    align-items: center;
    height: 59px;
    flex-shrink: 0;
    border-top: 1px solid #444;
    background-color: #1c1c1c;
}

.weather {
    display: flex;
    align-items: center;
    gap: 9px;
    padding-left: 25px;
}

.weather span {
    color: #c4c4c4;
}

.apps {
    display: flex;
    align-items: center;
    gap: 5px;
    margin-right: 44px;
}

.app {
    display: flex;
    align-items: center;
    justify-content: center;
    width: 50px;
    height: 50px;
    border-radius: 5px;
    position: relative;
}

.start {
    margin-right: 2px;
}

.app.current {
    border: 1px solid #333;
    background-color: #292929;
}

.app.open::after,
.app.current::after {
    content: '';
    position: absolute;
    bottom: 0;
    width: 8px;
    height: 4px;
    border-radius: 2px;
    background-color: #999;
}

.app.current::after {
    width: 20px;
    background-color: #4cc2ff;
}

.task-search {
    display: flex;
    align-items: center;
    gap: 11px;
    width: 275px;
    height: 40px;
    padding: 0 3px 0 15px;
    border: 1px solid #555;
    border-radius: 20px;
    background-color: var(--chrome);
}

.task-search input {
    flex: 1;
    min-width: 0;
    border: none;
    outline: none;
    background: none;
    font: 16px 'Open Sans', sans-serif;
}

.task-search input::placeholder {
    color: #ccc;
}

.dell span {
    width: 28px;
    height: 28px;
    border: 2px solid #e8e8e8;
    border-radius: 50%;
    font: bold 8px/24px 'Liberation Sans', sans-serif;
    text-align: center;
}

.badge {
    position: absolute;
    top: 3px;
    right: 4px;
    width: 20px;
    height: 20px;
    border-radius: 50%;
    background-color: #088574;
    color: #bfe3de;
    font-size: 12px;
    line-height: 20px;
}

.tray {
    display: flex;
    align-items: center;
    justify-content: flex-end;
    gap: 20px;
    padding-right: 25px;
    font-size: 15px;
}

.lang {
    text-align: center;
    margin-left: 4px;
}

.status {
    display: flex;
    align-items: center;
    gap: 10px;
    margin-left: 2px;
}

.clock {
    margin-right: -9px;
    text-align: right;
}

.preview {
    position: relative;
    margin-left: 2px;
}

.preview b {
    position: absolute;
    left: 7px;
    bottom: -1px;
    width: 22px;
    border-radius: 2px;
    background-color: #ffc80a;
    color: #222;
    font-size: 8px;
    line-height: 9px;
    text-align: center;
}
```
